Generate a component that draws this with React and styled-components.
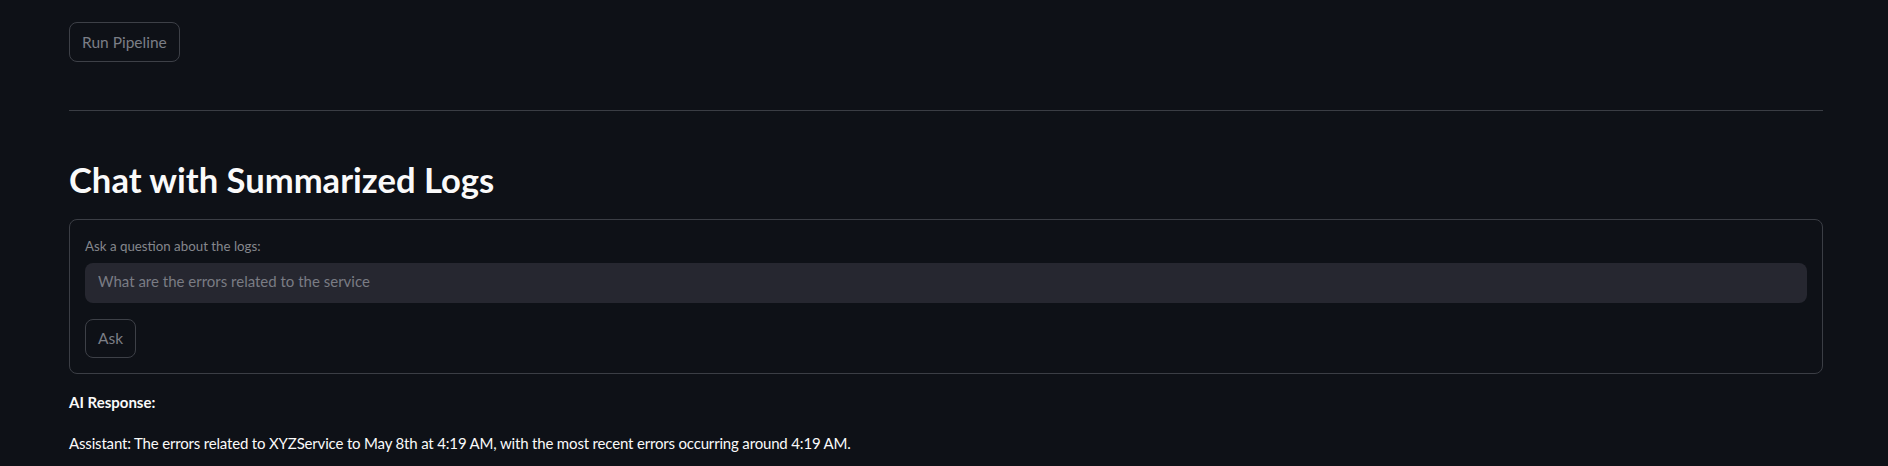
import React from "react";
import styled, { createGlobalStyle } from "styled-components";

const GlobalStyle = createGlobalStyle`
  html, body {
    margin: 0;
    padding: 0;
    background: #0e1117;
  }
  body {
    font-family: Lato, "Liberation Sans", sans-serif;
    color: #fafafa;
    -webkit-font-smoothing: antialiased;
  }
`;

const Main = styled.main`
  width: 1754px;
  padding: 22px 0 0 69px;
  display: flex;
  flex-direction: column;
`;

const Button = styled.button`
  align-self: flex-start;
  height: ${(p) => p.$height || 40}px;
  padding: 0 12px;
  background: transparent;
  border: 1px solid #3d4047;
  border-radius: 8px;
  color: #7b7e86;
  font-family: inherit;
  font-size: 15.5px;
  cursor: default;
`;

const Divider = styled.hr`
  margin: 48px 0 0;
  border: none;
  border-top: 1px solid #3a3d44;
  height: 0;
`;

const Heading = styled.h2`
  margin: 49px 0 0;
  font-size: 34.6px;
  font-weight: 700;
  line-height: 40.8px;
  color: #fafafa;
`;

const Form = styled.form`
  margin-top: 18px;
  padding: 16px 15px 15px;
  border: 1px solid #3b3e45;
  border-radius: 8px;
  display: flex;
  flex-direction: column;
`;

const Label = styled.label`
  font-size: 13.3px;
  line-height: 20px;
  color: #85878d;
  margin-bottom: 7px;
`;

const Input = styled.input`
  height: 40px;
  box-sizing: border-box;
  padding: 0 13px 3px;
  border: none;
  border-radius: 8px;
  background: #262730;
  color: #fafafa;
  font-family: inherit;
  font-size: 15px;
  outline: none;

  &::placeholder {
    color: #7a7c84;
  }
`;

const FormActions = styled.div`
  margin-top: 16px;
  display: flex;
`;

const Text = styled.p`
  margin: ${(p) => (p.$first ? "16px" : "0")} 0 16px;
  font-size: 15px;
  line-height: 25.6px;
  letter-spacing: ${(p) => (p.$bold ? "0" : "-0.17px")};
  font-weight: ${(p) => (p.$bold ? 700 : 400)};
`;

export default function App() {
  return (
    <>
      <GlobalStyle />
      <Main>
        <Button type="button">Run Pipeline</Button>
        <Divider />
        <Heading>Chat with Summarized Logs</Heading>
        <Form onSubmit={(e) => e.preventDefault()}>
          <Label htmlFor="question">Ask a question about the logs:</Label>
          <Input
            id="question"
            placeholder="What are the errors related to the service"
          />
          <FormActions>
            <Button type="submit" $height={39}>
              Ask
            </Button>
          </FormActions>
        </Form>
        <Text $first $bold>
          AI Response:
        </Text>
        <Text>
          Assistant: The errors related to XYZService to May 8th at 4:19 AM,
          with the most recent errors occurring around 4:19 AM.
        </Text>
      </Main>
    </>
  );
}
